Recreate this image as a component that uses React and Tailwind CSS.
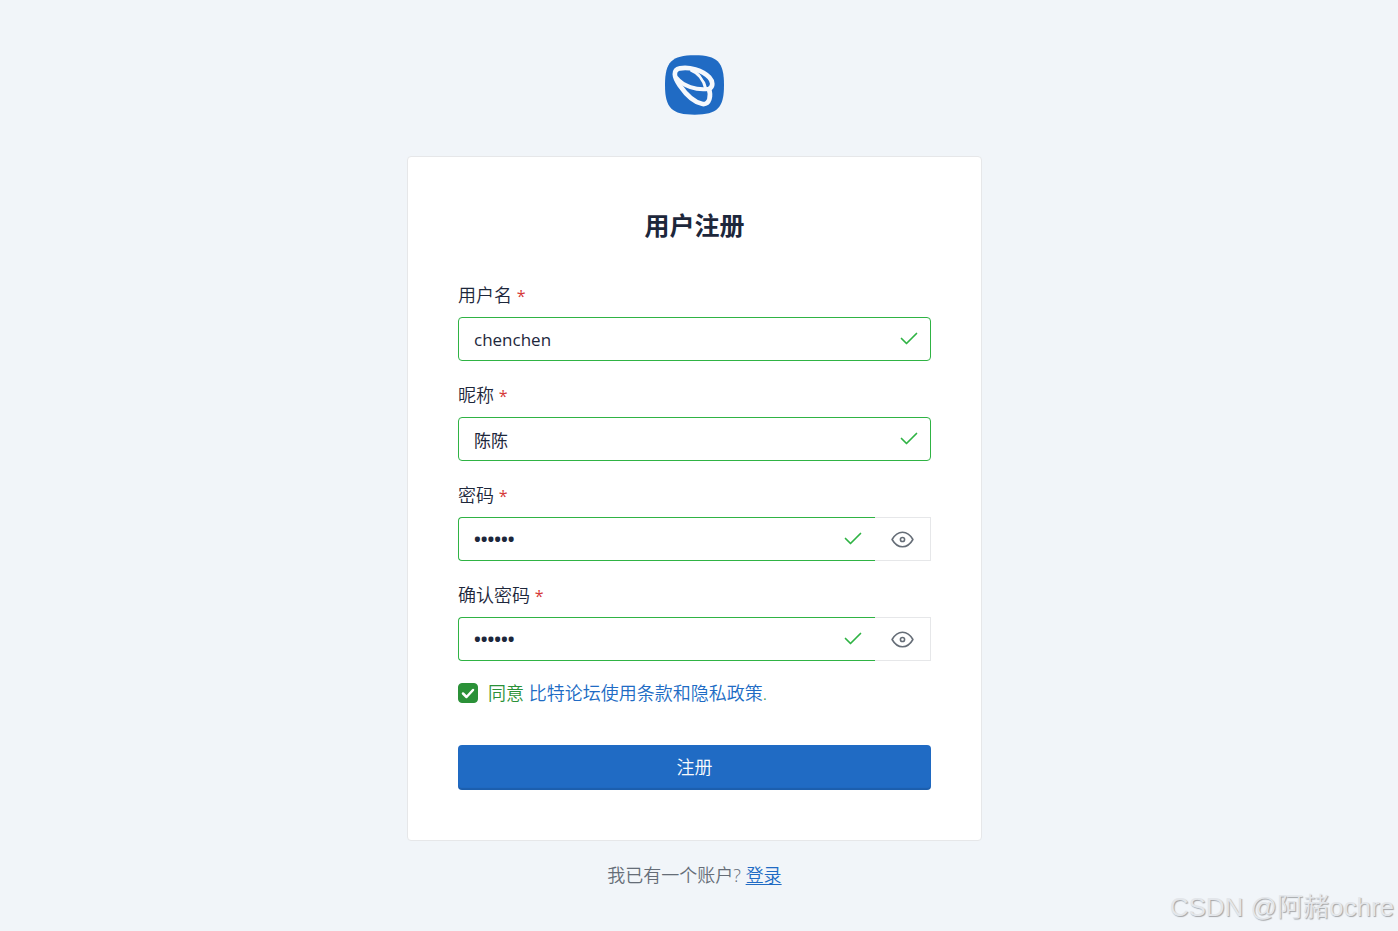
import React, { useState } from "react";

const Logo = () => (
  <svg viewBox="32 29 180 180" className="size-15" fill="none" aria-hidden="true">
    <path
      d="M121 30C190 30 209 51 209 119S190 208 121 208S32 188 32 119S52 30 121 30Z"
      fill="#206bc4"
    />
    <g stroke="#f5f8fc" strokeWidth="14" strokeLinecap="round" strokeLinejoin="round">
      <path d="M164 131C178 124 176 108 165 96C144 74 104 64 77 69C55 74 58 94 76 120C96 149 122 172 145 176C166 178 171 152 164 131Z" />
      <path d="M67 98C86 122 126 136 162 131" strokeWidth="12" />
      <path d="M112 76C130 82 148 102 154 130" strokeWidth="9" />
    </g>
    <path d="M138 88C151 96 161 106 162 116C152 112 144 98 138 88Z" fill="#206bc4" />
  </svg>
);

const CheckIcon = () => (
  <svg
    viewBox="0 0 24 24"
    className="absolute right-[10px] top-[9px] size-6 pointer-events-none"
    fill="none"
    stroke="#2fb344"
    strokeWidth="1.7"
    strokeLinecap="round"
    strokeLinejoin="round"
    aria-hidden="true"
  >
    <path d="M4.5 12.5l5 5l10 -10" />
  </svg>
);

const EyeIcon = () => (
  <svg
    viewBox="0 0 24 24"
    className="size-[25px]"
    fill="none"
    stroke="currentColor"
    strokeWidth="1.5"
    strokeLinecap="round"
    strokeLinejoin="round"
    aria-hidden="true"
  >
    <circle cx="12" cy="12" r="2" />
    <path d="M22 12c-2.667 4.667 -6 7 -10 7s-7.333 -2.333 -10 -7c2.667 -4.667 6 -7 10 -7s7.333 2.333 10 7" />
  </svg>
);

const FieldLabel = ({ id, children }) => (
  <label htmlFor={id} className="block mb-2 leading-7">
    {children} <span className="text-base font-normal text-[#d63939]">*</span>
  </label>
);

const TextField = ({ id, label, value, onChange }) => (
  <div className="mb-5">
    <FieldLabel id={id}>{label}</FieldLabel>
    <div className="relative">
      <input
        id={id}
        type="text"
        value={value}
        onChange={(e) => onChange(e.target.value)}
        className="block w-full h-11 pl-[15px] pr-12 text-[17px] font-normal bg-white border border-[#2fb344] rounded outline-none"
      />
      <CheckIcon />
    </div>
  </div>
);

const PasswordField = ({ id, label, value, onChange }) => {
  const [visible, setVisible] = useState(false);

  return (
    <div className="mb-5">
      <FieldLabel id={id}>{label}</FieldLabel>
      <div className="flex">
        <div className="relative flex-1">
          <input
            id={id}
            type={visible ? "text" : "password"}
            value={value}
            onChange={(e) => onChange(e.target.value)}
            className="block w-full h-11 pl-[15px] pr-12 font-bold bg-white border border-r-0 border-[#2fb344] rounded-l outline-none"
          />
          <CheckIcon />
        </div>
        <button
          type="button"
          aria-label="显示密码"
          onClick={() => setVisible(!visible)}
          className="flex items-center justify-center w-14 h-11 border border-l-0 border-[#e6e7e9] text-[#656d77]"
        >
          <EyeIcon />
        </button>
      </div>
    </div>
  );
};

const App = () => {
  const [username, setUsername] = useState("chenchen");
  const [nickname, setNickname] = useState("陈陈");
  const [password, setPassword] = useState("123456");
  const [passwordRepeat, setPasswordRepeat] = useState("123456");
  const [agreed, setAgreed] = useState(true);

  return (
    <div className="relative min-h-screen bg-[#f1f5f9] pt-[55px] pr-[9px] pb-10 text-[#1d273b] text-[18px] font-[350] font-['Open_Sans','Noto_Sans_CJK_SC',sans-serif]">
      <main className="w-full max-w-[575px] mx-auto">
        <a href="#" aria-label="比特论坛" className="flex justify-center mb-[41px]">
          <Logo />
        </a>

        <form
          onSubmit={(e) => e.preventDefault()}
          className="bg-white border border-[#e6e7e9] rounded p-[50px]"
        >
          <h2 className="mb-[38px] text-center text-[25px] leading-9 font-bold">用户注册</h2>

          <TextField id="username" label="用户名" value={username} onChange={setUsername} />
          <TextField id="nickname" label="昵称" value={nickname} onChange={setNickname} />
          <PasswordField id="password" label="密码" value={password} onChange={setPassword} />
          <PasswordField
            id="passwordRepeat"
            label="确认密码"
            value={passwordRepeat}
            onChange={setPasswordRepeat}
          />

          {/* Terms */}
          <div className="flex items-center mb-10 leading-6 text-[#2b9138]">
            <span className="relative size-5 mr-[10px]">
              <input
                id="policy"
                type="checkbox"
                checked={agreed}
                onChange={(e) => setAgreed(e.target.checked)}
                className="block appearance-none size-5 rounded border border-[#2b9138] checked:bg-[#2b9138]"
              />
              <svg
                viewBox="0 0 20 20"
                className="absolute inset-0 size-5 pointer-events-none"
                fill="none"
                stroke="white"
                strokeWidth="2.5"
                strokeLinecap="round"
                strokeLinejoin="round"
                aria-hidden="true"
              >
                <path d="M5 10.5l3.5 3.5l6.5 -7" />
              </svg>
            </span>
            <label htmlFor="policy">
              同意{" "}
              <a href="#" className="text-[#206bc4]">
                比特论坛使用条款和隐私政策
              </a>
              .
            </label>
          </div>

          <button
            type="submit"
            className="block w-full h-[45px] rounded bg-[#206bc4] text-[#f8fafc] shadow-[inset_0_-2px_1px_rgba(0,0,0,0.12)]"
          >
            注册
          </button>
        </form>

        <p className="mt-5 text-center leading-7 text-[#656d77]">
          我已有一个账户?{" "}
          <a href="#" className="text-[#206bc4] underline underline-offset-2">
            登录
          </a>
        </p>
      </main>

      <span className="absolute right-1 bottom-1 text-[26px] leading-10 text-[#e3e6ea] font-['Liberation_Sans','Noto_Sans_CJK_SC',sans-serif] [text-shadow:1px_1px_1px_#a3a5a8]">
        CSDN @阿赭ochre
      </span>
    </div>
  );
};

export default App;
